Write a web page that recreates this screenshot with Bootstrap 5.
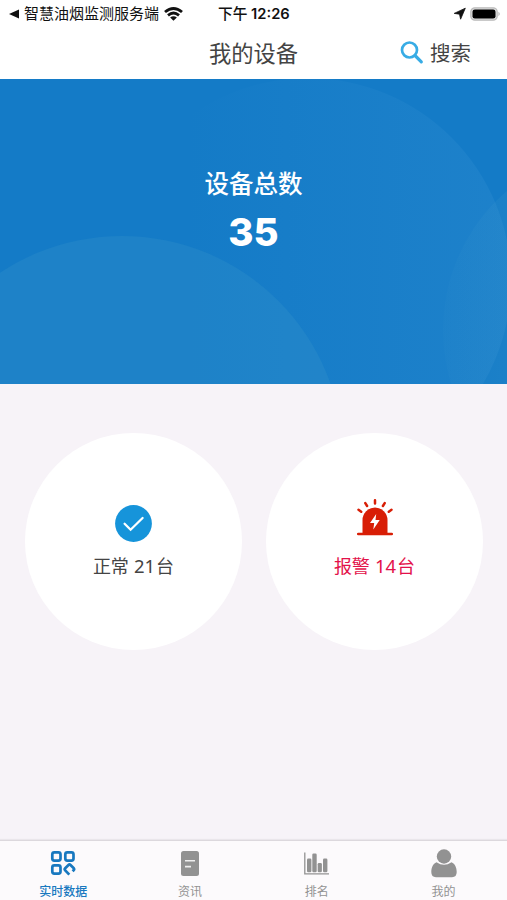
<!DOCTYPE html>
<html lang="zh-CN">
<head>
<meta charset="utf-8">
<meta name="viewport" content="width=device-width, initial-scale=1">
<title>我的设备</title>
<link href="https://cdn.jsdelivr.net/npm/bootstrap@5.3.0/dist/css/bootstrap.min.css" rel="stylesheet">
<style>
body{font-family:"Inter","Noto Sans CJK SC",sans-serif;background:#f7f3f8;color:#444;line-height:1}
svg{display:block;flex:none}
.screen{height:900px;overflow:hidden}
.status{height:27px;font-size:15px;color:#111;padding:0 6px 0 9px}
.status .app-name{font-weight:400;margin:0 5px 0 4px}
.status .clock{font-weight:600;font-size:14.7px;left:218px;top:7px;white-space:nowrap}
.status .clock b{font-weight:500}
.titlebar{height:52px}
.titlebar h1{font-size:22.3px;font-weight:400;line-height:53px;color:#444}
.search{right:36px;top:0;height:51px;font-size:20.5px;gap:6px;color:#444}
.search span{padding-top:3px}
.hero{height:305px;background:#147bc7}
.hero-label{font-size:24.5px;font-weight:500;line-height:30px;padding-top:90px}
.hero-total{font-size:38.5px;font-weight:800;line-height:40px;margin-top:13px}
.disc{width:217px;height:217px;background:#fff;padding-top:65px;font-size:18px}
.disc-icon{height:50px}
.disc-icon.raised{padding-bottom:11px}
.disc-text{margin-top:8px;line-height:20px}
.disc-text .num{font-family:"Noto Sans","Noto Sans CJK SC",sans-serif;font-size:18.5px;margin-right:1px}
.alarm{color:#e3114a}
.discs{padding:49px 24px 0 25px}
.tabs{height:60px;background:#fcfafc;border-top:1px solid #dcd8dd;box-shadow:0 -1px 1px #eae6eb;font-size:12px}
.tabs a{color:#929292;padding-top:7px}
.tabs a.current{color:#1878bf;font-weight:500}
.tabs span{line-height:14px;margin-top:7px}
</style>
</head>
<body>
<div class="screen d-flex flex-column">
  <header class="bg-white">
    <div class="status d-flex align-items-center position-relative">
      <svg width="11" height="10" viewBox="0 0 11 10"><path d="M0 5 10 .5v9z" fill="#111"/></svg>
      <span class="app-name">智慧油烟监测服务端</span>
      <svg width="19" height="14" viewBox="0 0 19 14" fill="none" stroke="#111" stroke-width="2.900"><path d="M1 5Q9.500-2 18 5M4 8.300q5.500-4.400 11 0"/><path d="M9.500 13.700 6.100 10.500q3.400-2.500 6.800 0z" fill="#111" stroke="none"/></svg>
      <span class="clock position-absolute"><b>下午</b> 12:26</span>
      <div class="ms-auto d-flex align-items-center gap-1">
        <svg width="13" height="13" viewBox="0 0 13 13"><path d="M12.300 1.200 7.600 12.200 6.500 7.200 1.200 6.400z" fill="#111" stroke="#111" stroke-width=".8"/></svg>
        <svg width="31" height="14" viewBox="0 0 31 14"><rect x=".8" y=".8" width="26.400" height="12.400" rx="4" fill="#ddd" stroke="#bbb" stroke-width="1.200"/><rect x="2.500" y="2.400" width="23" height="9.200" rx="2.400" fill="#000"/><path d="M28.500 4.800q2.400 2.200 0 4.400z" fill="#aaa"/></svg>
      </div>
    </div>
    <div class="titlebar position-relative text-center">
      <h1 class="m-0">我的设备</h1>
      <div class="search position-absolute d-flex align-items-center">
        <svg width="24" height="24" viewBox="0 0 24 24" fill="none" stroke="#38ace5"><circle cx="9.500" cy="9" r="7.500" stroke-width="2.700"/><path d="m15 14.500 6.300 6.300" stroke-width="3.200" stroke-linecap="round"/></svg>
        <span>搜索</span>
      </div>
    </div>
  </header>
  <section class="hero position-relative text-center text-white">
    <svg class="position-absolute top-0 start-0" width="507" height="305" viewBox="0 79 507 305">
      <defs>
        <linearGradient id="glow" x1="0" y1="0" x2="1" y2="0"><stop offset=".2" stop-color="#4da1dc" stop-opacity="0"/><stop offset="1" stop-color="#4da1dc" stop-opacity=".17"/></linearGradient>
        <linearGradient id="edge" gradientUnits="userSpaceOnUse" x1="443" y1="0" x2="507" y2="0"><stop offset="0" stop-color="#48a0ce" stop-opacity=".05"/><stop offset="1" stop-color="#48a0ce" stop-opacity=".14"/></linearGradient>
      </defs>
      <circle cx="308" cy="281" r="203" fill="url(#glow)"/>
      <circle cx="122" cy="457" r="221" fill="#48a0ce" fill-opacity=".2"/>
      <circle cx="626" cy="330" r="183" fill="url(#edge)"/>
    </svg>
    <div class="position-relative">
      <div class="hero-label">设备总数</div>
      <div class="hero-total">35</div>
    </div>
  </section>
  <main class="discs d-flex justify-content-between flex-grow-1">
    <div class="disc rounded-circle d-flex flex-column align-items-center">
      <div class="disc-icon d-flex align-items-center">
        <svg width="37" height="37" viewBox="0 0 37 37"><circle cx="18.500" cy="18.500" r="18.400" fill="#1694da"/><path d="m9.600 18.700 6 6L27.600 13" fill="none" stroke="#fff" stroke-width="2.300" stroke-linecap="round"/></svg>
      </div>
      <div class="disc-text">正常 <span class="num">21</span>台</div>
    </div>
    <div class="disc rounded-circle d-flex flex-column align-items-center alarm">
      <div class="disc-icon raised d-flex align-items-center">
        <svg width="36" height="38" viewBox="0 0 36 38" fill="#d81e06"><path d="M5.500 35V21a12.500 12.500 0 0 1 25 0V35z"/><path d="M1.200 35h33.600M18 1.300v3.200M8.300 4.100l1.800 2.900M27.700 4.100l-1.800 2.900M1.500 10.800l2.700 1.900M34.500 10.800l-2.700 1.900" stroke="#d81e06" stroke-width="2.500" stroke-linecap="round"/><path d="M19.200 15 13 24h4.200l-.9 6.400L22.700 21h-4.200z" fill="#fff"/></svg>
      </div>
      <div class="disc-text">报警 <span class="num">14</span>台</div>
    </div>
  </main>
  <nav class="tabs row g-0 text-center">
    <a class="current col d-flex flex-column align-items-center text-decoration-none" href="#">
      <svg width="26" height="30" viewBox="0 0 26 30" fill="none" stroke="currentColor" stroke-width="2.700"><rect x="2.300" y="4.400" width="8.200" height="8.200" rx="2"/><rect x="15.300" y="4.400" width="8.200" height="8.200" rx="2"/><rect x="2.300" y="17.400" width="8.200" height="8.200" rx="2"/><path d="M19.300 26.700 15.200 22.300q-1-1 0-2l3.300-3.300q1-1 2 0l3.300 3.300q.8 1-.2 2l-1 1" stroke-linejoin="round"/></svg>
      <span>实时数据</span>
    </a>
    <a class="col d-flex flex-column align-items-center text-decoration-none" href="#">
      <svg width="18" height="30" viewBox="0 0 18 30"><rect y="3" width="18" height="25" rx="2.500" fill="#929292"/><path d="M4 12.800h10M4 18.600h6" stroke="#eee" stroke-width="1.600"/></svg>
      <span>资讯</span>
    </a>
    <a class="col d-flex flex-column align-items-center text-decoration-none" href="#">
      <svg width="25" height="30" viewBox="0 0 25 30" fill="#929292"><path d="M.8 4.500v21.300H25" fill="none" stroke="#929292" stroke-width="1.300"/><rect x="3" y="10.500" width="4.400" height="13.700" rx="1.300"/><rect x="8.300" y="5.500" width="4.400" height="18.700" rx="1.300"/><rect x="13.700" y="15" width="4.200" height="9.200" rx="1.300"/><rect x="19" y="10.500" width="4.400" height="13.700" rx="1.300"/></svg>
      <span>排名</span>
    </a>
    <a class="col d-flex flex-column align-items-center text-decoration-none" href="#">
      <svg width="26" height="30" viewBox="0 0 26 30" fill="#929292"><circle cx="13" cy="8.500" r="7.200"/><path d="M5.500 14.300q7.500 5 15 0c3.500 1.500 5.200 5.500 5.200 9.700q0 5.200-4.700 5.200H5Q.3 29.200.3 24c0-4.200 1.700-8.200 5.200-9.700z"/></svg>
      <span>我的</span>
    </a>
  </nav>
</div>
<script src="https://cdn.jsdelivr.net/npm/bootstrap@5.3.0/dist/js/bootstrap.bundle.min.js"></script>
</body>
</html>
